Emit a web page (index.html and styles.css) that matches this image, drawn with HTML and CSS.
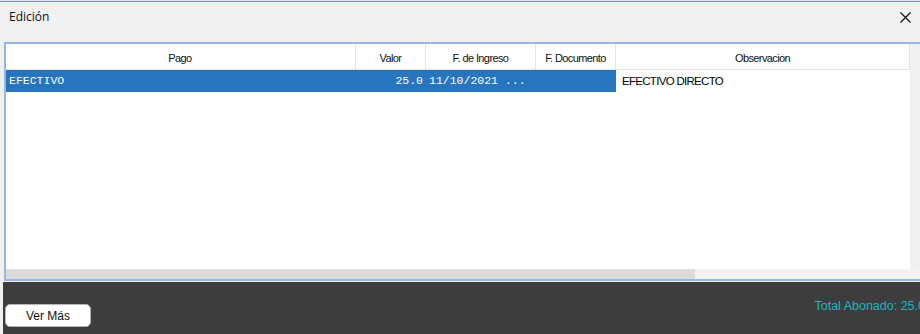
FILE: index.html
```html
<!DOCTYPE html>
<html lang="es">
<head>
    <meta charset="UTF-8">
    <meta name="viewport" content="width=device-width, initial-scale=1.0">
    <title>Edición</title>
    <link rel="stylesheet" href="styles.css">
</head>
<body>
    <div class="topline"></div>
    <div class="titlebar">
        <span class="title">Edición</span>
        <svg class="close" width="11" height="11" viewBox="0 0 11 11">
            <path d="M0.5 0.5 L10.5 10.5 M10.5 0.5 L0.5 10.5" stroke="#111" stroke-width="1.2" fill="none"/>
        </svg>
    </div>

    <div class="content">
        <div class="frame">
            <div class="view">
                <div class="table">
                    <div class="row head">
                        <div class="cell">Pago</div>
                        <div class="cell">Valor</div>
                        <div class="cell">F. de Ingreso</div>
                        <div class="cell">F. Documento</div>
                        <div class="cell">Observacion</div>
                    </div>
                    <div class="row item">
                        <div class="cell sel">EFECTIVO</div>
                        <div class="cell sel num">25.0</div>
                        <div class="cell sel">11/10/2021 ...</div>
                        <div class="cell sel"></div>
                        <div class="cell obs">EFECTIVO DIRECTO</div>
                    </div>
                </div>
                <div class="vscroll"></div>
            </div>
            <div class="hscroll">
                <div class="thumb"></div>
                <div class="track"></div>
            </div>
        </div>

        <div class="footer">
            <button class="more">Ver Más</button>
            <span class="total">Total Abonado: 25.0</span>
        </div>
    </div>
</body>
</html>
```

FILE: styles.css
```css
body {
    margin: 0;
    background-color: #f0f0f0;
    font-family: "Liberation Sans", Arial, sans-serif;
    overflow: hidden;
}
.topline {
    height: 1px;
    background-color: #e6e6e6;
    border-bottom: 1px solid #5b9cb4;
}
.titlebar {
    height: 40px;
    display: flex;
    align-items: flex-start;
    justify-content: space-between;
    padding: 0 9px 0 9px;
}
.title {
    font-family: "Open Sans", "Noto Sans", sans-serif;
    font-size: 12px;
    line-height: 16px;
    margin-top: 7px;
    color: #111;
}
.close {
    margin-top: 10px;
}
.content {
    padding-left: 3px;
}
.frame {
    margin-left: 1px;
    border: 2px solid #91b8e6;
    border-right: none;
    height: 235px;
    display: flex;
    flex-direction: column;
    background-color: #ffffff;
}
.view {
    flex: 1;
    display: flex;
}
.table {
    width: 904px;
}
.vscroll {
    flex: 1;
    background-color: #f0f0f0;
}
.row {
    display: grid;
    grid-template-columns: 350px 70px 110px 80px 294px;
}
.head {
    height: 25px;
    border-bottom: 1px solid #e3e3e3;
}
.head .cell {
    border-right: 1px solid #e3e3e3;
    text-align: center;
    font-size: 11px;
    letter-spacing: -0.6px;
    line-height: 25px;
    padding-top: 2px;
    height: 23px;
    color: #111;
}
.head .cell:first-child {
    padding-right: 1px;
}
.item {
    height: 20px;
}
.item .cell {
    font-size: 11.5px;
    line-height: 21px;
    padding: 0 3px;
    white-space: nowrap;
}
.sel {
    background-color: #2775bf;
    color: #ffffff;
    font-family: "Liberation Mono", "Courier New", monospace;
}
.num {
    text-align: right;
}
.obs {
    color: #000;
    font-size: 12px;
    letter-spacing: -0.7px;
    line-height: 22px !important;
    padding-left: 6px !important;
}
.hscroll {
    height: 10px;
    display: flex;
}
.thumb {
    width: 689px;
    background-color: #dbdbdb;
}
.track {
    flex: 1;
    background-color: #f3f3f3;
}
.footer {
    height: 52px;
    margin-top: 1px;
    background-color: #3d3d3d;
    display: flex;
    align-items: flex-start;
    justify-content: space-between;
    overflow: hidden;
}
.more {
    margin: 22px 0 0 2px;
    width: 86px;
    height: 23px;
    background-color: #ffffff;
    border: 1px solid #b5b5b5;
    border-radius: 5px;
    font-family: "Liberation Sans", Arial, sans-serif;
    font-size: 12px;
    color: #111;
    padding: 0;
}
.total {
    margin-top: 17px;
    margin-right: -5px;
    font-size: 12.5px;
    line-height: 14px;
    color: #1fb3bf;
    white-space: nowrap;
}
```
